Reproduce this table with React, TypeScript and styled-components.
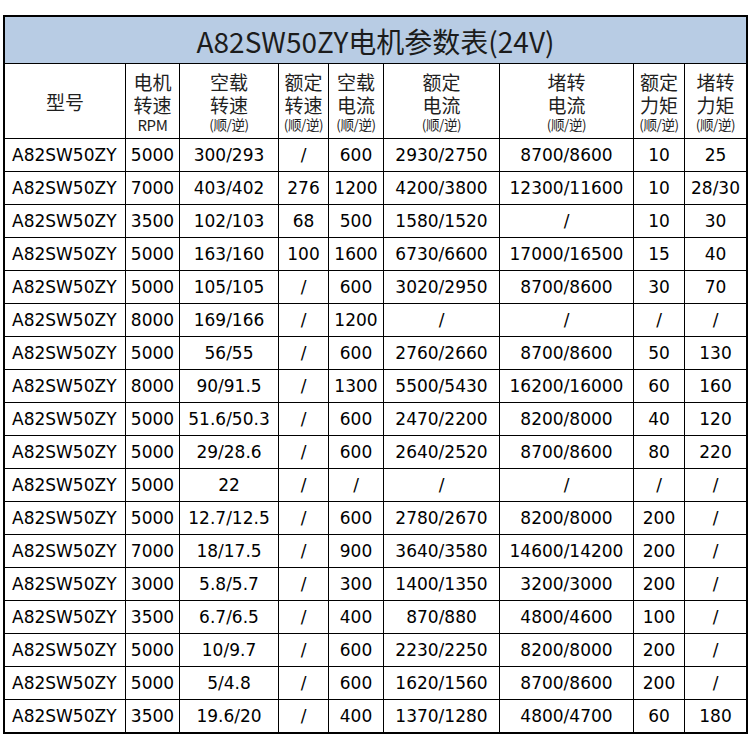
import styled, { createGlobalStyle } from 'styled-components';

const GlobalStyle = createGlobalStyle`
  html, body {
    margin: 0;
    padding: 0;
    background: #fff;
  }
`;

const Page = styled.div`
  padding: 15px 0 0 3px;
`;

// The black background shows through the 1px gaps as the grid lines.
const Sheet = styled.div`
  display: grid;
  width: 745px;
  box-sizing: border-box;
  grid-template-columns: 120px 53px 98px 49px 54px 115px 133px 50px 61px;
  grid-template-rows: 46px 74px repeat(18, 32px);
  gap: 1px;
  padding: 2px;
  background: #000;
`;

const TitleCell = styled.div`
  grid-column: 1 / -1;
  display: flex;
  align-items: center;
  justify-content: center;
  background: #b8cce4;
  color: #1c1c1c;
  font-family: 'Noto Sans CJK SC', 'Noto Sans', sans-serif;
  font-size: 28px;
  line-height: 34px;
  padding-top: 1px;
`;

const HeadCell = styled.div`
  display: flex;
  flex-direction: column;
  align-items: center;
  justify-content: center;
  background: #fff;
  color: #1f1f1f;
  font-family: 'Noto Sans CJK SC', 'Noto Sans', sans-serif;
  font-size: 19px;
  line-height: 23px;
  padding-top: 1px;
`;

const HeadLine = styled.span`
  display: block;
  white-space: nowrap;
`;

const HeadNote = styled.span<{ $size: number }>`
  display: block;
  font-size: ${(p) => p.$size}px;
  line-height: 17px;
  white-space: nowrap;
  letter-spacing: -0.4px;
`;

const DataCell = styled.div<{ $left?: boolean }>`
  display: flex;
  align-items: center;
  justify-content: ${(p) => (p.$left ? 'flex-start' : 'center')};
  padding-left: ${(p) => (p.$left ? '7px' : '0')};
  background: #fff;
  color: #000;
  font-family: 'DejaVu Sans', Verdana, sans-serif;
  font-size: 17px;
  white-space: nowrap;
`;

const headers: { lines: string[]; note?: string }[] = [
  { lines: ['型号'] },
  { lines: ['电机', '转速'], note: 'RPM' },
  { lines: ['空载', '转速'], note: '(顺/逆)' },
  { lines: ['额定', '转速'], note: '(顺/逆)' },
  { lines: ['空载', '电流'], note: '(顺/逆)' },
  { lines: ['额定', '电流'], note: '(顺/逆)' },
  { lines: ['堵转', '电流'], note: '(顺/逆)' },
  { lines: ['额定', '力矩'], note: '(顺/逆)' },
  { lines: ['堵转', '力矩'], note: '(顺/逆)' },
];

const rows: string[][] = [
  ['5000', '300/293', '/', '600', '2930/2750', '8700/8600', '10', '25'],
  ['7000', '403/402', '276', '1200', '4200/3800', '12300/11600', '10', '28/30'],
  ['3500', '102/103', '68', '500', '1580/1520', '/', '10', '30'],
  ['5000', '163/160', '100', '1600', '6730/6600', '17000/16500', '15', '40'],
  ['5000', '105/105', '/', '600', '3020/2950', '8700/8600', '30', '70'],
  ['8000', '169/166', '/', '1200', '/', '/', '/', '/'],
  ['5000', '56/55', '/', '600', '2760/2660', '8700/8600', '50', '130'],
  ['8000', '90/91.5', '/', '1300', '5500/5430', '16200/16000', '60', '160'],
  ['5000', '51.6/50.3', '/', '600', '2470/2200', '8200/8000', '40', '120'],
  ['5000', '29/28.6', '/', '600', '2640/2520', '8700/8600', '80', '220'],
  ['5000', '22', '/', '/', '/', '/', '/', '/'],
  ['5000', '12.7/12.5', '/', '600', '2780/2670', '8200/8000', '200', '/'],
  ['7000', '18/17.5', '/', '900', '3640/3580', '14600/14200', '200', '/'],
  ['3000', '5.8/5.7', '/', '300', '1400/1350', '3200/3000', '200', '/'],
  ['3500', '6.7/6.5', '/', '400', '870/880', '4800/4600', '100', '/'],
  ['5000', '10/9.7', '/', '600', '2230/2250', '8200/8000', '200', '/'],
  ['5000', '5/4.8', '/', '600', '1620/1560', '8700/8600', '200', '/'],
  ['3500', '19.6/20', '/', '400', '1370/1280', '4800/4700', '60', '180'],
];

export default function App() {
  return (
    <Page>
      <GlobalStyle />
      <Sheet>
        <TitleCell>A82SW50ZY电机参数表(24V)</TitleCell>
        {headers.map((h, i) => (
          <HeadCell key={`h${i}`}>
            {h.lines.map((l) => (
              <HeadLine key={l}>{l}</HeadLine>
            ))}
            {h.note && <HeadNote $size={h.note === 'RPM' ? 15 : 13.5}>{h.note}</HeadNote>}
          </HeadCell>
        ))}
        {rows.map((r, ri) => [
          <DataCell key={`m${ri}`} $left>
            A82SW50ZY
          </DataCell>,
          ...r.map((v, ci) => <DataCell key={`${ri}-${ci}`}>{v}</DataCell>),
        ])}
      </Sheet>
    </Page>
  );
}
